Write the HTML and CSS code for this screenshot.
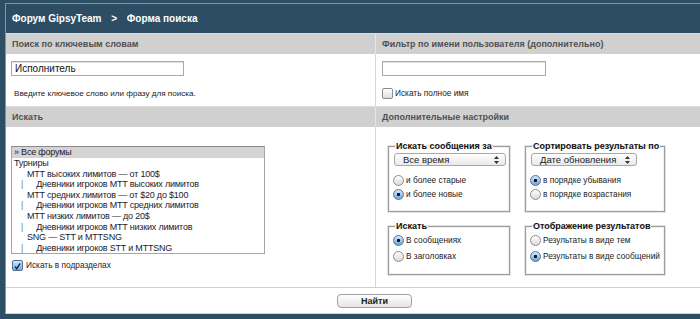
FILE: index.html
```html
<!DOCTYPE html>
<html lang="ru">
<head>
    <meta charset="UTF-8" />
    <title>Форма поиска</title>
    <link rel="stylesheet" href="styles.css">
</head>
<body>
    <div id="frame">
        <div id="topbar">Форум GipsyTeam <span class="sep">&gt;</span> Форма поиска</div>

        <div id="form">
            <div class="bar">Поиск по ключевым словам</div>
            <div class="bar right">Фильтр по имени пользователя (дополнительно)</div>

            <div class="cell">
                <div class="textbox">Исполнитель</div>
                <div class="hint">Введите ключевое слово или фразу для поиска.</div>
            </div>
            <div class="cell right">
                <div class="textbox"></div>
                <label class="opt check-row"><span class="check"></span>Искать полное имя</label>
            </div>

            <div class="bar">Искать</div>
            <div class="bar right">Дополнительные настройки</div>

            <div class="cell">
                <div class="listbox">
                    <div class="item selected">» Все форумы</div>
                    <div class="item">Турниры</div>
                    <div class="item lvl1">MTT высоких лимитов — от 100$</div>
                    <div class="item lvl2"><span class="pipe">|</span>Дневники игроков MTT высоких лимитов</div>
                    <div class="item lvl1">MTT средних лимитов — от $20 до $100</div>
                    <div class="item lvl2"><span class="pipe">|</span>Дневники игроков MTT средних лимитов</div>
                    <div class="item lvl1">MTT низких лимитов — до 20$</div>
                    <div class="item lvl2"><span class="pipe">|</span>Дневники игроков MTT низких лимитов</div>
                    <div class="item lvl1">SNG — STT и MTTSNG</div>
                    <div class="item lvl2"><span class="pipe">|</span>Дневники игроков STT и MTTSNG</div>
                </div>
                <label class="opt sub-row">
                    <span class="check on">
                        <svg width="11" height="11" viewBox="0 0 11 11"><path d="M2.5 5.5 L4.6 8.2 L8.8 1.6" fill="none" stroke="#1b2a3a" stroke-width="1.7"/></svg>
                    </span>Искать в подразделах
                </label>
            </div>
            <div class="cell right">
                <div class="boxes">
                    <fieldset class="box tall">
                        <legend>Искать сообщения за</legend>
                        <div class="select">Все время
                            <svg width="5" height="8" viewBox="0 0 5 8"><path d="M0 3 L2.5 0 L5 3Z M0 5 L2.5 8 L5 5Z" fill="#333"/></svg>
                        </div>
                        <label class="opt"><span class="radio"></span>и более старые</label>
                        <label class="opt"><span class="radio on"></span>и более новые</label>
                    </fieldset>
                    <fieldset class="box tall">
                        <legend>Сортировать результаты по</legend>
                        <div class="select narrow">Дате обновления
                            <svg width="5" height="8" viewBox="0 0 5 8"><path d="M0 3 L2.5 0 L5 3Z M0 5 L2.5 8 L5 5Z" fill="#333"/></svg>
                        </div>
                        <label class="opt"><span class="radio on"></span>в порядке убывания</label>
                        <label class="opt"><span class="radio"></span>в порядке возрастания</label>
                    </fieldset>
                    <fieldset class="box">
                        <legend>Искать</legend>
                        <label class="opt wide"><span class="radio on"></span>В сообщениях</label>
                        <label class="opt wide"><span class="radio"></span>В заголовках</label>
                    </fieldset>
                    <fieldset class="box">
                        <legend>Отображение результатов</legend>
                        <label class="opt wide"><span class="radio"></span>Результаты в виде тем</label>
                        <label class="opt wide"><span class="radio on"></span>Результаты в виде сообщений</label>
                    </fieldset>
                </div>
            </div>
        </div>

        <div id="footer"><button class="btn">Найти</button></div>
    </div>
</body>
</html>
```

FILE: styles.css
```css
* { box-sizing: border-box; }
body {
    margin: 0;
    background: #2d4f66;
    font-family: "Liberation Sans", Arial, sans-serif;
    color: #222;
}
#frame {
    margin: 3px 0 0 5px;
    background: #fff;
    border-top: 1px solid #7e96a8;
    border-left: 1px solid #7e96a8;
    border-bottom: 1px solid #c9d2d9;
}
#topbar {
    height: 29px;
    background: #2c4d64;
    color: #fff;
    font-weight: bold;
    font-size: 10px;
    display: flex;
    align-items: center;
    padding-left: 6px;
    white-space: pre;
}
#topbar .sep { margin: 0 7px; }

/* ───────── form grid ───────── */
#form {
    display: grid;
    grid-template-columns: 369px 1fr;
    grid-template-rows: 21px 52px 21px 160px;
}
.bar {
    background: #d0d0d0;
    border-top: 1px solid #dcdcdc;
    font-size: 9px;
    font-weight: bold;
    color: #505050;
    display: flex;
    align-items: center;
    padding-left: 6px;
}
.bar.right { border-left: 1px solid #e6e6e6; }
.cell { padding: 7px 0 0 5px; }
.cell.right { border-left: 1px solid #d6d6d6; padding-left: 6px; }

.textbox {
    width: 173px;
    height: 15px;
    border: 1px solid #a9a9a9;
    box-shadow: inset 0 1px 1px rgba(0,0,0,0.12);
    font-size: 10px;
    line-height: 13px;
    padding-left: 3px;
    color: #111;
}
.right .textbox { width: 164px; }
.hint {
    font-size: 8.1px;
    margin: 13px 0 0 3px;
}

/* ───────── options ───────── */
.opt {
    display: flex;
    align-items: center;
    gap: 2px;
    font-size: 8.3px;
    color: #222;
    height: 14px;
    white-space: nowrap;
}
.check-row { margin-top: 10px; gap: 2px; }
.sub-row { margin-top: 4px; gap: 3px; padding-left: 1px; }
.check {
    width: 11px;
    height: 11px;
    border: 1px solid #8c8c8c;
    border-radius: 2px;
    background: linear-gradient(#ffffff, #dedede);
    display: inline-flex;
}
.check.on {
    border-color: #4d6f96;
    background: linear-gradient(#d5e6f8, #78a9de);
}
.radio {
    width: 11px;
    height: 11px;
    border-radius: 50%;
    border: 1px solid #8e8e8e;
    background: linear-gradient(#ffffff, #d9d9d9);
    flex: none;
}
.radio.on {
    border-color: #51779f;
    background: radial-gradient(circle, #111 0 1.3px, transparent 1.9px), linear-gradient(#d6e7f9, #6ea4dc);
}

/* ───────── forum list ───────── */
.listbox {
    width: 254px;
    height: 108px;
    margin-top: 12px;
    border: 1px solid #a5a5a5;
    border-top-color: #8a8a8a;
    overflow: hidden;
    font-size: 9px;
    letter-spacing: -0.2px;
    color: #231a2e;
}
.item {
    height: 10.6px;
    line-height: 10.6px;
    padding-left: 2px;
    white-space: nowrap;
}
.item.selected { background: #d4d4d4; height: 11px; }
.item.lvl1 { padding-left: 15px; }
.item.lvl2 { padding-left: 9px; }
.pipe { color: #7a8a70; margin-right: 13px; }

/* ───────── extra settings ───────── */
.boxes {
    display: grid;
    grid-template-columns: 122px 140px;
    column-gap: 15px;
    row-gap: 9px;
    margin: 7px 0 0 6px;
}
.box {
    margin: 0;
    min-width: 0;
    border: 1px solid #9c9c9c;
    box-shadow: inset 0 0 0 1px #f0f0f0, 0 0 0 1px #e4e4e4;
    padding: 1px 0 0 4px;
    height: 54px;
}
.box.tall { height: 71px; }
.box legend {
    font-size: 9px;
    font-weight: bold;
    color: #111;
    padding: 0 1px;
    margin-left: 2px;
    white-space: nowrap;
}
.select {
    width: 112px;
    height: 13px;
    margin: 1px 0 7px 1px;
    border: 1px solid #a8a8a8;
    border-radius: 3px;
    background: linear-gradient(#ffffff, #e9e9e9);
    font-size: 9.5px;
    display: flex;
    align-items: center;
    justify-content: space-between;
    padding: 0 6px 0 8px;
}
.select.narrow { width: 106px; }
.box .opt { height: 14px; }
.box .opt.wide { height: 16px; }

/* ───────── footer ───────── */
#footer {
    border-top: 1px solid #cfcfcf;
    height: 26px;
    padding: 6px 0 0 331px;
}
.btn {
    display: block;
    width: 75px;
    height: 14px;
    padding: 0;
    border: 1px solid #a0a0a0;
    border-radius: 4px;
    background: linear-gradient(#ffffff, #e4e4e4);
    font-family: "Liberation Sans", Arial, sans-serif;
    font-size: 9px;
    font-weight: bold;
    color: #222;
}
```
